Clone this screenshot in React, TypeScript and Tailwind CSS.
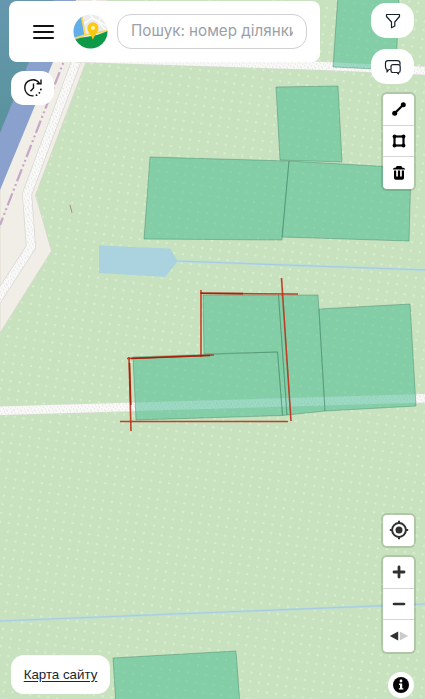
import React from "react";

const PARCELS = [
  "338,-5 399,-5 396,70 333,67",
  "276,87 338,86 342,162 280,160",
  "150,157 289,161 282,240 144,239",
  "289,161 411,168 409,241 282,237",
  "203,295 278.500,295 287,415 282.500,415.500 277.500,352 204,354",
  "278.500,295 318,295 325,411 287,415",
  "319,309 410,304 416,406 325,411",
  "133,357 277.500,352 282.500,415.500 136,420",
  "113,658 236,651 240,705 116,705",
];

const SKETCH_LINES = [
  "M201 290V357",
  "M200 293.300L298 294",
  "M281.500 278L291 421",
  "M127 358.500L214 355",
  "M129 357L131 431",
  "M120 421.500H288",
];

function MapCanvas() {
  return (
    <svg
      viewBox="0 0 425 699"
      className="absolute inset-0 h-full w-full"
      aria-hidden="true"
    >
      <defs>
        <linearGradient id="sea" x1="0" y1="0" x2="0" y2="1">
          <stop offset="0" stopColor="#6597ae" />
          <stop offset="1" stopColor="#59939c" />
        </linearGradient>
        <pattern
          id="orchard"
          width="9"
          height="8.8"
          patternUnits="userSpaceOnUse"
          patternTransform="translate(5.300 3) rotate(8)"
        >
          <circle cx="4" cy="4" r="1.150" fill="#d9efcc" />
        </pattern>
        <pattern
          id="gravel"
          width="7"
          height="7"
          patternUnits="userSpaceOnUse"
        >
          <rect width="7" height="7" fill="#f8f8f7" />
          <path
            d="M1 1h1M5 0h1M3 3h1M0 5h1M6 4h1M4 6h1"
            stroke="#e1e0df"
            strokeWidth="1"
          />
        </pattern>
      </defs>

      <rect width="425" height="699" fill="#c8e2bf" />
      <rect width="425" height="699" fill="url(#orchard)" />

      {/* shore and water */}
      <path
        d="M0 0H108L86 62L35.500 195L51.500 251L0 333Z"
        fill="#f1eee8"
        stroke="#d5d4c5"
        strokeWidth=".7"
      />
      <path d="M0 0H76L53 62L0 190Z" fill="#8aa1ce" />
      <path d="M0 0H54L29 62L0 133Z" fill="url(#sea)" />
      <path
        d="M69 48L0 225"
        fill="none"
        stroke="#c4a8c5"
        strokeWidth="2.200"
        strokeDasharray="13 3 2 3 2 3"
      />

      {/* tracks */}
      <g fill="none" strokeLinejoin="round">
        <path
          d="M96 0L76 62L27 194L31 247L-4 301"
          stroke="#d9d7d4"
          strokeWidth="10"
        />
        <path
          d="M96 0L76 62L27 194L31 247L-4 301"
          stroke="url(#gravel)"
          strokeWidth="8.500"
        />
        <path d="M76 58L325 66L430 71" stroke="#d6d8d2" strokeWidth="9" />
        <path
          d="M76 58L325 66L430 71"
          stroke="url(#gravel)"
          strokeWidth="8"
        />
        <path d="M-5 411L430 398" stroke="#d8dcd4" strokeWidth="9.500" />
        <path
          d="M-5 411L430 398"
          stroke="url(#gravel)"
          strokeWidth="8.500"
        />
      </g>

      {/* pond and drains */}
      <path d="M99 245.500L170 248.500L178 261L165 277L99 273Z" fill="#aad3df" />
      <g fill="none">
        <path d="M176 261L425 270" stroke="#b9dcd8" strokeWidth="2.400" />
        <path d="M176 261L425 270" stroke="#a7cbe5" strokeWidth="1.200" />
        <path d="M0 621L425 604" stroke="#b9dcd8" strokeWidth="2.400" />
        <path d="M0 621L425 604" stroke="#a7cbe5" strokeWidth="1.200" />
      </g>
      <path d="M70 205L72 213" stroke="#ad7c7c" strokeWidth=".9" />

      {PARCELS.map((points) => (
        <polygon
          key={points}
          points={points}
          fill="#3dba8d"
          fillOpacity=".5"
          stroke="#2f7056"
          strokeOpacity=".6"
          strokeWidth=".6"
        />
      ))}

      <g fill="none" stroke="#bf3018" strokeOpacity=".9" strokeWidth="1.600">
        {SKETCH_LINES.map((d) => (
          <path key={d} d={d} />
        ))}
        <path
          d="M201 293.300L243 293.600M131 358.500L210 355.500M129.500 363L130.800 405"
          stroke="#a51c08"
          strokeWidth="1.600"
        />
      </g>
    </svg>
  );
}

function Logo() {
  return (
    <svg viewBox="0 0 36 36" className="h-[35px] w-[35px] shrink-0">
      <defs>
        <clipPath id="logoClip">
          <circle cx="18" cy="18" r="17.500" />
        </clipPath>
      </defs>
      <g clipPath="url(#logoClip)">
        <rect width="36" height="36" fill="#ebecee" />
        <path d="M0 0H9L12.500 22L0 27Z" fill="#62aee8" />
        <path
          d="M11 10L20 4L36 13M17 0L22 6M29 2L26 8L34 17"
          stroke="#fff"
          strokeWidth="1.300"
          fill="none"
        />
        <path
          d="M8.500 0L12.500 22M0 25.500L13 21.500L36 17"
          stroke="#f8d65b"
          strokeWidth="1.800"
          fill="none"
        />
        <path d="M0 27Q8 24 15 23.500Q26 22 36 17.500V36H0Z" fill="#0c9a49" />
      </g>
      <path
        d="M20.500 26.500C19 21.500 14.800 19 14.800 14.300a5.700 5.700 0 0 1 11.400 0C26.200 19 22 21.500 20.500 26.500Z"
        fill="#fbc912"
      />
      <circle cx="20.500" cy="14.300" r="2" fill="#fff3c2" />
    </svg>
  );
}

function HistoryIcon() {
  return (
    <svg
      viewBox="0 0 20 20"
      className="h-5 w-5"
      fill="none"
      stroke="#111"
      strokeWidth="1.400"
    >
      <path d="M10.500 17.800C5.500 18.500 1.800 14.500 1.800 10a8 8 0 0 1 14.500-4.800" />
      <path d="M18 1.500V5.800H13.600M10.500 5.500V10L7.500 13.300" />
      <path
        d="M13.500 17.200h.1M16.300 14.800h.1M17.800 11.500h.1"
        strokeWidth="1.800"
        strokeLinecap="round"
      />
    </svg>
  );
}

function ChatIcon() {
  return (
    <svg
      viewBox="0 0 18 16"
      className="h-4 w-[18px]"
      fill="none"
      stroke="#18212a"
      strokeWidth="1.200"
      strokeLinejoin="round"
    >
      <path d="M6.500 10.500H5L3 13v-2.600Q1.500 10 1.500 8V4Q1.500 1.600 4 1.600h9.300Q16 1.600 16 4v1.700" />
      <path d="M9 5.700h5.200q2 0 2 2v3.800q0 1.900-1.700 2V15L13 13.500H9q-2 0-2-2V7.700q0-2 2-2Z" />
    </svg>
  );
}

const TOOLS = [
  {
    title: "line",
    icon: (
      <svg viewBox="0 0 16 16" className="h-4 w-4">
        <path d="M3.500 12.500L12.500 3.500" stroke="#080808" strokeWidth="2.300" />
        <circle cx="3.700" cy="12.200" r="2.500" />
        <circle cx="12.300" cy="3.800" r="2.500" />
      </svg>
    ),
  },
  {
    title: "polygon",
    icon: (
      <svg viewBox="0 0 16 16" className="h-4 w-4">
        <rect
          x="3.500"
          y="3.500"
          width="9"
          height="9"
          fill="none"
          stroke="#080808"
          strokeWidth="2.200"
        />
        <circle cx="3.500" cy="3.500" r="1.900" />
        <circle cx="12.500" cy="3.500" r="1.900" />
        <circle cx="3.500" cy="12.500" r="1.900" />
        <circle cx="12.500" cy="12.500" r="1.900" />
      </svg>
    ),
  },
  {
    title: "trash",
    icon: (
      <svg viewBox="0 0 16 16" className="h-4 w-4">
        <path d="M1.800 4.500Q2 2.800 5 2.600L5.600 1h4.800L11 2.600q3 .2 3.200 1.900Z" />
        <path d="M3 5.500h2.200v6h1.700v-6h2.200v6h1.700v-6H13V13q0 1.800-1.800 1.800H4.800Q3 14.800 3 13Z" />
      </svg>
    ),
  },
];

const CONTROL_GROUP =
  "flex w-[31px] flex-col divide-y divide-[#d5d5d5] overflow-hidden rounded-[4px] bg-white shadow-[0_0_0_2px_rgba(0,0,0,0.12)]";

function App() {
  return (
    <main className="relative h-[699px] w-full overflow-hidden bg-[#c8e2bf] font-['Liberation_Sans',Arial,sans-serif]">
      <MapCanvas />
      <div className="relative flex h-full justify-between">
        <div className="flex flex-col items-start pt-px pl-[9px]">
          <header className="flex h-[61px] w-[311px] items-center rounded-[8px] bg-white pl-6">
            <button aria-label="menu" className="flex w-[21px] flex-col gap-1">
              <span className="h-[2px] rounded bg-[#111]" />
              <span className="h-[2px] rounded bg-[#111]" />
              <span className="h-[2px] rounded bg-[#111]" />
            </button>
            <div className="ml-[19px]">
              <Logo />
            </div>
            <div className="ml-[9px] flex h-[35px] w-[190px] items-center rounded-[14px] border border-[#cfd1d6] bg-white px-[13px]">
              <input
                type="text"
                placeholder="Пошук: номер ділянки"
                className="w-full bg-transparent font-['Inter',sans-serif] text-[15.2px] outline-none placeholder:text-[#9ca0a8]"
              />
            </div>
          </header>
          <button
            aria-label="history"
            className="mt-[9px] ml-[2px] flex h-[34px] w-[43px] items-center justify-center rounded-[13px] bg-white"
          >
            <HistoryIcon />
          </button>
          <a
            href="#sitemap"
            className="mt-auto mb-[5px] ml-[2px] flex h-[39px] w-[99px] items-center justify-center rounded-[13px] bg-white text-[13.3px] text-[#20252c] underline underline-offset-2"
          >
            Карта сайту
          </a>
        </div>

        <aside className="flex flex-col items-end pt-[3px] pr-[11px]">
          <button
            aria-label="filter"
            className="flex h-[35px] w-[43px] items-center justify-center rounded-[15px] bg-white"
          >
            <svg
              viewBox="0 0 16 16"
              className="h-4 w-4"
              fill="none"
              stroke="#18212a"
              strokeWidth="1.200"
              strokeLinejoin="round"
            >
              <path d="M1.500 1.500h13v2L9.800 9v4L6.500 14.800V9L1.500 3.500Z" />
            </svg>
          </button>
          <button
            aria-label="chat"
            className="mt-[11px] flex h-[35px] w-[43px] items-center justify-center rounded-[15px] bg-white"
          >
            <ChatIcon />
          </button>

          <div className={`mt-[10px] ${CONTROL_GROUP}`}>
            {TOOLS.map((tool) => (
              <button
                key={tool.title}
                aria-label={tool.title}
                className="flex h-[31.5px] items-center justify-center"
              >
                {tool.icon}
              </button>
            ))}
          </div>

          <div className={`mt-auto ${CONTROL_GROUP}`}>
            <button
              aria-label="locate"
              className="flex h-[31px] items-center justify-center"
            >
              <svg viewBox="0 0 20 20" className="h-5 w-5">
                <circle
                  cx="10"
                  cy="10"
                  r="6.900"
                  fill="none"
                  stroke="#303030"
                  strokeWidth="2"
                />
                <circle cx="10" cy="10" r="3.500" fill="#303030" />
                <path
                  d="M10 .8v3M10 16.200v3M.8 10h3M16.200 10h3"
                  stroke="#303030"
                  strokeWidth="2"
                />
              </svg>
            </button>
          </div>

          <div className={`mt-[11.5px] ${CONTROL_GROUP}`}>
            <button
              aria-label="zoom in"
              className="flex h-[31.5px] items-center justify-center"
            >
              <svg viewBox="0 0 14 14" className="h-3.5 w-3.5">
                <path
                  d="M7 2v10M2 7h10"
                  stroke="#303030"
                  strokeWidth="2.800"
                  strokeLinecap="round"
                />
              </svg>
            </button>
            <button
              aria-label="zoom out"
              className="flex h-[31.5px] items-center justify-center"
            >
              <svg viewBox="0 0 14 14" className="h-3.5 w-3.5">
                <path
                  d="M2 7h10"
                  stroke="#303030"
                  strokeWidth="2.600"
                  strokeLinecap="round"
                />
              </svg>
            </button>
            <button
              aria-label="bearing"
              className="flex h-[31.5px] items-center justify-center"
            >
              <svg viewBox="0 0 20 10" className="h-2.5 w-5">
                <path d="M9.200 .6V9.400L.8 5Z" fill="#303030" />
                <path d="M10.800 .6V9.400L19.200 5Z" fill="#cbcbcb" />
              </svg>
            </button>
          </div>

          <button
            aria-label="info"
            className="mt-[20.5px] mb-px flex h-[26px] w-[26px] shrink-0 items-center justify-center rounded-full bg-white"
          >
            <svg viewBox="0 0 16 16" className="h-4 w-4">
              <circle cx="8" cy="8" r="8" fill="#050505" />
              <circle cx="8" cy="4" r="1.400" fill="#fff" />
              <path
                d="M6 6.600h3.200v4.600h1.100v1.400H5.900v-1.400H7V8H6Z"
                fill="#fff"
              />
            </svg>
          </button>
        </aside>
      </div>
    </main>
  );
}

export default App;
